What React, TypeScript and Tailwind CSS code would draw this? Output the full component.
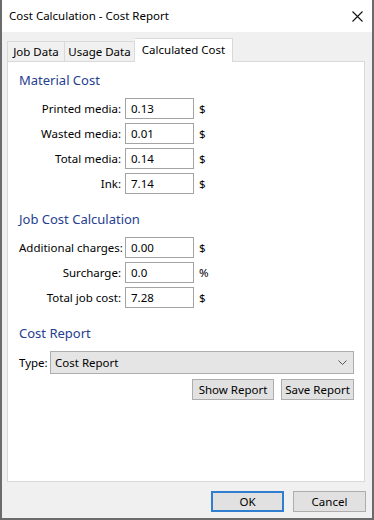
import React from "react";

const font = { fontFamily: '"Segoe UI", "Noto Sans", "Liberation Sans", sans-serif' };

function Row({ label, value, unit }: { label: string; value: string; unit: string }) {
  return (
    <div className="flex items-center h-[21px]">
      <div className="w-[102px] text-right text-[11.5px] text-black leading-none whitespace-nowrap">{label}</div>
      <div className="ml-[4px] w-[69px] h-[21px] border border-[#a3a3a3] bg-white flex items-center pl-[5px] text-[11.5px] text-black">
        {value}
      </div>
      <div className="ml-[5px] text-[11.5px] text-black">{unit}</div>
    </div>
  );
}

function Heading({ children }: { children: React.ReactNode }) {
  return <div className="text-[13px] leading-[20px] text-[#25408f] whitespace-nowrap">{children}</div>;
}

export default function App() {
  return (
    <div
      className="w-[374px] h-[520px] flex flex-col bg-[#f0f0f0] border-l-2 border-r-2 border-b-2 border-[#6b6b6b] overflow-hidden"
      style={font}
    >
      {/* Title bar */}
      <div className="h-[32px] bg-white flex items-center justify-between pl-[7px] pr-[9px] shrink-0">
        <span className="text-[11.5px] text-black whitespace-nowrap">Cost Calculation - Cost Report</span>
        <svg width="11" height="11" viewBox="0 0 11 11">
          <path d="M0.5 0.5 L10.5 10.5 M10.5 0.5 L0.5 10.5" stroke="#111" strokeWidth="1.1" fill="none" />
        </svg>
      </div>

      {/* Tabs */}
      <div className="ml-[5px] mt-[6px] flex items-end h-[23px] relative z-10">
        <div className="h-[20px] w-[58px] border border-b-0 border-[#d9d9d9] bg-[#f0f0f0] text-[11.5px] flex items-center justify-center whitespace-nowrap">
          Job Data
        </div>
        <div className="h-[20px] w-[70px] border border-l-0 border-b-0 border-[#d9d9d9] bg-[#f0f0f0] text-[11.5px] flex items-center justify-center whitespace-nowrap">
          Usage Data
        </div>
        <div className="h-[24px] -mb-px w-[98px] border border-l-0 border-b-0 border-[#d9d9d9] bg-white text-[11.5px] flex items-center justify-center pb-[2px] whitespace-nowrap">
          Calculated Cost
        </div>
      </div>

      {/* Panel */}
      <div className="ml-[5px] w-[358px] h-[421px] border border-[#d9d9d9] bg-white pl-[11px] pr-[10px] pt-[8px] flex flex-col">
        <Heading>Material Cost</Heading>
        <div className="mt-[8px] flex flex-col gap-[4px]">
          <Row label="Printed media:" value="0.13" unit="$" />
          <Row label="Wasted media:" value="0.01" unit="$" />
          <Row label="Total media:" value="0.14" unit="$" />
          <Row label="Ink:" value="7.14" unit="$" />
        </div>

        <div className="mt-[15px]">
          <Heading>Job Cost Calculation</Heading>
        </div>
        <div className="mt-[8px] flex flex-col gap-[4px]">
          <Row label="Additional charges:" value="0.00" unit="$" />
          <Row label="Surcharge:" value="0.0" unit="%" />
          <Row label="Total job cost:" value="7.28" unit="$" />
        </div>

        <div className="mt-[15px]">
          <Heading>Cost Report</Heading>
        </div>
        <div className="mt-[8px] flex items-center">
          <span className="text-[11.5px] text-black w-[31px]">Type:</span>
          <div className="flex-1 h-[23px] border border-[#adadad] bg-[#e5e5e5] flex items-center justify-between pl-[4px] pr-[6px] text-[11.5px] text-black">
            <span>Cost Report</span>
            <svg width="9" height="5" viewBox="0 0 9 5">
              <path d="M0.5 0.5 L4.5 4.5 L8.5 0.5" stroke="#555" strokeWidth="1" fill="none" />
            </svg>
          </div>
        </div>
        <div className="mt-[5px] flex justify-end gap-[7px]">
          <div className="w-[82px] h-[21px] border border-[#adadad] bg-[#e1e1e1] text-[11.5px] text-black flex items-center justify-center whitespace-nowrap">
            Show Report
          </div>
          <div className="w-[73px] h-[21px] border border-[#adadad] bg-[#e1e1e1] text-[11.5px] text-black flex items-center justify-center whitespace-nowrap">
            Save Report
          </div>
        </div>
      </div>

      {/* Bottom buttons */}
      <div className="mt-[9px] flex justify-end gap-[9px] pr-[6px]">
        <div className="w-[73px] h-[21px] border-2 border-[#2f7ed0] bg-[#e1e1e1] text-[11.5px] text-black flex items-center justify-center">
          OK
        </div>
        <div className="w-[73px] h-[21px] border border-[#adadad] bg-[#e1e1e1] text-[11.5px] text-black flex items-center justify-center">
          Cancel
        </div>
      </div>
    </div>
  );
}
